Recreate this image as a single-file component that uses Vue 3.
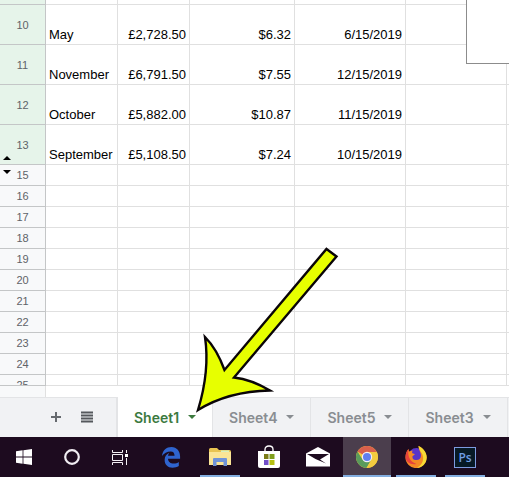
<template>
  <div class="sheet-page">
    <div class="grid-area">
      <table class="grid">
        <colgroup>
          <col class="col-head">
          <col class="col-month">
          <col class="col-total">
          <col class="col-price">
          <col class="col-date">
          <col class="col-extra">
          <col>
        </colgroup>
        <tbody>
          <tr class="row-top">
            <th class="selected"></th>
            <td v-for="n in 6" :key="n"></td>
          </tr>
          <tr v-for="row in rows" :key="row.id" class="row-tall">
            <th class="selected" scope="row">
              {{ row.id }}
              <button v-if="row.id === 13" class="hidden-toggle up" aria-label="Show hidden rows"></button>
            </th>
            <td class="text">{{ row.month }}</td>
            <td>{{ row.total }}</td>
            <td>{{ row.price }}</td>
            <td>{{ row.date }}</td>
            <td></td>
            <td></td>
          </tr>
          <tr v-for="id in emptyRows" :key="id" class="row-short">
            <th scope="row">
              {{ id }}
              <button v-if="id === 15" class="hidden-toggle down" aria-label="Show hidden rows"></button>
            </th>
            <td v-for="n in 6" :key="n"></td>
          </tr>
          <tr class="row-cut">
            <th scope="row"><div class="cut">25</div></th>
            <td v-for="n in 6" :key="n"></td>
          </tr>
        </tbody>
      </table>
      <div class="side-panel"></div>
    </div>

    <div class="grid-footer"><div class="footer-head"></div></div>

    <nav class="tab-bar">
      <div class="tab-tools">
        <button class="tool" aria-label="Add sheet">
          <svg width="12" height="12" viewBox="0 0 12 12"><path d="M6 1V11M1 6H11" stroke="#666a6e" stroke-width="2" /></svg>
        </button>
        <button class="tool" aria-label="All sheets">
          <svg width="12" height="12" viewBox="0 0 12 12"><path d="M0 1.5H12M0 4.5H12M0 7.5H12M0 10.5H12" stroke="#55585c" stroke-width="2" /></svg>
        </button>
      </div>
      <button
        v-for="tab in tabs"
        :key="tab"
        class="tab"
        :class="{ active: tab === current }"
        @click="current = tab"
      >
        {{ tab }}
        <span class="caret"></span>
      </button>
    </nav>

    <footer class="taskbar">
      <button class="task" aria-label="Start">
        <svg width="16" height="16" viewBox="0 0 16 16" fill="#fff">
          <path d="M0 2.2L6.6 1.3V7.5H0zM7.4 1.2L16 0V7.5H7.4zM0 8.4H6.6V14.7L0 13.8zM7.4 8.4H16V16L7.4 14.8z" />
        </svg>
      </button>
      <button class="task" aria-label="Search">
        <svg width="16" height="16" viewBox="0 0 16 16"><circle cx="8" cy="8" r="6.8" fill="none" stroke="#f1edf2" stroke-width="2.2" /></svg>
      </button>
      <button class="task" aria-label="Task view">
        <svg width="16" height="16" viewBox="0 0 16 16" fill="none" stroke="#f4f0f5">
          <path d="M.5 1V3.5H10.5V1M.5 5.5H10.5V11.5H.5zM.5 16V13.5H10.5V16M14.5 1V4M14.5 9V16" />
          <path d="M13 5H16V8H13z" fill="#fff" stroke="none" />
        </svg>
      </button>
      <span class="divider"></span>
      <button class="task" aria-label="Edge">
        <svg width="20" height="22" viewBox="0 0 22 22" preserveAspectRatio="none">
          <path d="M1 10C2 4 6 1 11.5 1C17.5 1 21 5.3 21 10.5V12.8H7.7C7.9 16 10.5 17.6 13.8 17.6C16.2 17.6 18 17 19.6 16V20C17.7 21.2 15.2 21.7 12.7 21.7C7.5 21.7 4 18.6 4 14C4 10.5 6 8 9.2 6.7C8.3 7.7 7.9 8.700 7.7 9.7H14.9C14.9 7 13.5 5.5 10.7 5.5C6.7 5.5 3.2 7.3 1 10z" fill="#2f64cf" />
        </svg>
      </button>
      <button class="task open" aria-label="File Explorer">
        <svg width="22" height="20" viewBox="0 0 22 20">
          <path d="M0 2.5Q0 1 1.500 1H8L10 3H20.500Q22 3 22 4.5V18H0z" fill="#e8c452" />
          <path d="M0 5H22V18H0z" fill="#fae596" />
          <path d="M12 3.5H20V5H12z" fill="#d7f2c0" />
          <path d="M4 19V12Q4 11 5 11H17Q18 11 18 12V19H14.5V15H7.5V19z" fill="#6f93d8" />
        </svg>
      </button>
      <button class="task" aria-label="Store">
        <svg width="22" height="24" viewBox="0 0 22 24">
          <path d="M7 7V4.5Q7 1 11 1T15 4.5V7" fill="none" stroke="#fff" stroke-width="1.3" />
          <path d="M0 6H22V21Q22 23 20 23H2Q0 23 0 21z" fill="#fff" />
          <path d="M6 9H10.5V14H6z" fill="#7b7b16" />
          <path d="M11.5 9H16.5V14H11.5z" fill="#7f9e1c" />
          <path d="M6 15H10.5V20H6z" fill="#7350c9" />
          <path d="M11.5 15H16.5V20H11.5z" fill="#b5bf12" />
        </svg>
      </button>
      <button class="task" aria-label="Mail">
        <svg width="24" height="20" viewBox="0 0 24 20">
          <path d="M0 6.5L12 0L24 6.5V19.5H0z" fill="#fff" />
          <path d="M1 7H23L14 12.5L20 16.5L9.5 12z" fill="#1d0b1f" />
        </svg>
      </button>
      <button class="task open focused" aria-label="Chrome">
        <svg width="22" height="22" viewBox="0 0 22 22">
          <circle cx="11" cy="11" r="11" fill="#f3cb3f" />
          <path d="M11 11L1.47 5.5A11 11 0 0 1 20.53 5.5z" fill="#d8604c" />
          <path d="M1.47 5.5A11 11 0 0 0 10.5 22L15.5 13.5L11 11L6.5 13.5z" fill="#5a9b5c" />
          <path d="M11 6H20.8A11 11 0 0 1 10.5 22L15.5 13.5z" fill="#f3cb3f" />
          <circle cx="11" cy="11" r="5.2" fill="#f4eef5" />
          <circle cx="11" cy="11" r="4" fill="#5f7ff0" />
        </svg>
      </button>
      <button class="task open" aria-label="Firefox">
        <svg width="22" height="22" viewBox="0 0 22 22">
          <circle cx="11.5" cy="10.5" r="8.5" fill="#5a35c7" />
          <path d="M13.5 0C17 2 21.7 6 21.7 11.5A10.6 10.6 0 0 1 .5 11.5C.5 8 1.5 5 3.5 3L4 5.5L7.5 4.5L7 7L10 8.3L7.5 10.3C7 13 9 14.5 11.5 14C14 14 16 12.5 16 9.5C16 6.5 14 5 13.5 0z" fill="#f58a25" />
          <path d="M13.5 0C18 2 21.7 6 21.7 11.5C21.7 17 17.5 21.5 12 22C16.5 19 18.3 16 18.1 11.5C18 7 14 5 13.5 0z" fill="#f7da35" />
          <path d="M.5 11.5C.5 8 1.5 5 3.5 3C2.6 10 4 15 11.5 18C5 19 1 16 .5 11.5z" fill="#e7423c" />
        </svg>
      </button>
      <button class="task open" aria-label="Photoshop"><span class="ps">Ps</span></button>
    </footer>

    <svg class="pointer" width="150" height="180" viewBox="0 0 150 180">
      <path
        d="M136.5 9L146.5 16.500L44 137.500C57 139 69 144 80 150.5C55 151 29 157 8 170C15 147 19 124 15 97C22 104 29 115 34.5 130z"
        fill="#e7ff00"
        stroke="#0a0508"
        stroke-width="2.4"
      />
    </svg>
  </div>
</template>

<script setup>
import { ref } from 'vue'

const rows = [
  { id: 10, month: 'May', total: '£2,728.50', price: '$6.32', date: '6/15/2019' },
  { id: 11, month: 'November', total: '£6,791.50', price: '$7.55', date: '12/15/2019' },
  { id: 12, month: 'October', total: '£5,882.00', price: '$10.87', date: '11/15/2019' },
  { id: 13, month: 'September', total: '£5,108.50', price: '$7.24', date: '10/15/2019' }
]

const emptyRows = [15, 16, 17, 18, 19, 20, 21, 22, 23, 24]

const tabs = ['Sheet1', 'Sheet4', 'Sheet5', 'Sheet3']
const current = ref('Sheet1')
</script>

<style>
body {
  background: #fff;
}
</style>

<style scoped>
.sheet-page {
  position: relative;
  overflow: hidden;
  font-family: "Liberation Sans", Arial, sans-serif;
}

button {
  padding: 0;
  border: none;
  background: transparent;
  font: inherit;
}

svg {
  display: block;
}

/* grid */
.grid-area {
  position: relative;
}

.grid {
  width: 100%;
  table-layout: fixed;
  border-collapse: separate;
  border-spacing: 0;
}

.col-head {
  width: 46px;
}

.col-month,
.col-total {
  width: 72px;
}

.col-price {
  width: 105px;
}

.col-date {
  width: 111px;
}

.col-extra {
  width: 101px;
}

th,
td {
  box-sizing: border-box;
  border-right: 1px solid #e0e0e0;
  border-bottom: 1px solid #e0e0e0;
}

td:last-child {
  border-right: none;
}

th {
  position: relative;
  padding: 0;
  border-color: #c4c6c7;
  background: #f8f9fa;
  color: #5f6368;
  font-size: 11px;
  font-weight: 400;
  line-height: 12px;
  text-align: center;
}

th.selected {
  background: #e6f4ea;
}

td {
  padding: 0 3px 2px;
  color: #000;
  font-size: 13px;
  line-height: 15px;
  text-align: right;
  vertical-align: bottom;
}

td.text {
  text-align: left;
}

.row-top {
  height: 5px;
}

.row-tall {
  height: 40px;
}

.row-short {
  height: 21px;
}

.row-cut {
  height: 11px;
}

/* last row is only partly scrolled into view */
.cut {
  height: 6px;
  padding-top: 4px;
  overflow: hidden;
}

.hidden-toggle {
  position: absolute;
  left: 3px;
  border: 4px solid transparent;
}

.hidden-toggle.up {
  bottom: 4px;
  border-top: none;
  border-bottom-color: #000;
}

.hidden-toggle.down {
  top: 5px;
  border-bottom: none;
  border-top-color: #000;
}

.side-panel {
  position: absolute;
  top: 0;
  right: 0;
  width: 42px;
  height: 63px;
  border-left: 1px solid #8c8c8c;
  border-bottom: 1px solid #8c8c8c;
  background: #fff;
}

.grid-footer {
  height: 11px;
}

.footer-head {
  width: 45px;
  height: 100%;
  border-right: 1px solid #e0e0e0;
  background: #f8f9fa;
}

/* sheet tabs */
.tab-bar {
  display: flex;
  height: 40px;
  background: #f1f2f4;
  box-shadow: inset 0 1px #e3e4e6;
}

.tab-tools {
  display: flex;
  box-sizing: border-box;
  width: 118px;
  padding-left: 50px;
  gap: 19px;
  border-right: 2px solid #e3e4e6;
}

.tool {
  display: flex;
  align-items: center;
}

.tab {
  display: flex;
  align-items: center;
  gap: 9px;
  padding: 0 16px;
  border-right: 1px solid #e3e4e6;
  color: #898d91;
  font-family: Inter, "Liberation Sans", sans-serif;
  font-size: 14px;
  font-weight: 600;
}

.tab.active {
  background: #fff;
  color: #3c7a3f;
}

.caret {
  border: 4px solid transparent;
  border-top-color: currentColor;
  border-bottom: none;
}

/* taskbar */
.taskbar {
  display: flex;
  height: 40px;
  background: #1d0b1f;
}

.task {
  position: relative;
  display: flex;
  align-items: center;
  justify-content: center;
  width: 48px;
  margin-right: 1px;
}

.task:nth-child(-n + 3) {
  margin-right: 0;
}

.divider {
  width: 3px;
}

.task.open::after {
  content: "";
  position: absolute;
  right: 4px;
  bottom: 0;
  left: 4px;
  height: 2px;
  background: #83aee0;
}

.task.focused {
  background: #4b3e4d;
}

.task.focused::after {
  right: 0;
  left: 0;
}

.ps {
  width: 20px;
  border: 1px solid #7d9be0;
  background: #071a26;
  color: #6f9fe6;
  font-family: "Open Sans", sans-serif;
  font-size: 12px;
  font-weight: 600;
  line-height: 19px;
}

.pointer {
  position: absolute;
  top: 240px;
  left: 190px;
  pointer-events: none;
}
</style>
